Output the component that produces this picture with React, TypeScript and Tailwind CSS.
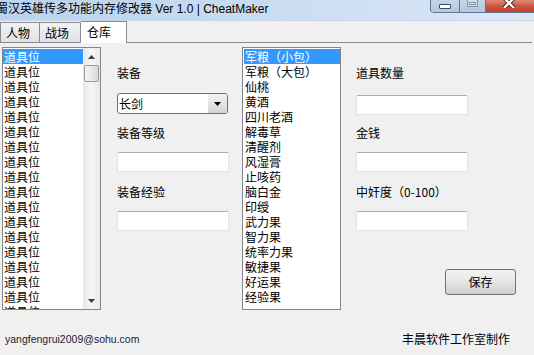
import React from 'react';

const cjk = { fontFamily: '"Noto Sans CJK SC", "Noto Sans", sans-serif' };

const leftItems = Array.from({ length: 18 }, () => '道具位');
const midItems = [
  '军粮（小包）',
  '军粮（大包）',
  '仙桃',
  '黄酒',
  '四川老酒',
  '解毒草',
  '清醒剂',
  '风湿膏',
  '止咳药',
  '脑白金',
  '印绶',
  '武力果',
  '智力果',
  '统率力果',
  '敏捷果',
  '好运果',
  '经验果',
];

const ListRow: React.FC<{ text: string; selected?: boolean }> = ({ text, selected }) => (
  <div
    className={`h-[15px] leading-[15px] pl-px text-[12px] whitespace-nowrap overflow-hidden ${
      selected ? 'bg-[#3399ff] text-white' : 'text-black'
    }`}
  >
    {text}
  </div>
);

const TextBox: React.FC<{ className?: string }> = ({ className = '' }) => (
  <div
    className={`h-[20px] w-[112px] bg-white rounded-[2px] border border-[#dfe3ea] border-t-[#abadb3] ${className}`}
  />
);

const Label: React.FC<{ children: React.ReactNode; className?: string }> = ({ children, className = '' }) => (
  <div className={`text-[12px] leading-[16px] text-black whitespace-nowrap ${className}`}>{children}</div>
);

export default function App() {
  return (
    <div className="w-[534px] h-[355px] overflow-hidden bg-[#f0f0f0] flex flex-col" style={cjk}>
      {/* title bar */}
      <div className="h-[21px] shrink-0 flex items-start bg-gradient-to-r from-[#bcd3ed] via-[#c9dcf1] to-[#dbe8f6] border-b border-[#c6d6e8]">
        <div className="ml-[-4px] mt-[1px] text-[12px] leading-[14px] text-black whitespace-nowrap">
          蜀汉英雄传多功能内存修改器
          <span style={{ fontFamily: '"Liberation Sans", Arial, sans-serif' }}> Ver 1.0 | CheatMaker</span>
        </div>
        <div className="flex-1" />
        <div className="flex h-[13px] mr-[-8px] border border-t-0 border-[#5f7696] rounded-b-[4px] overflow-hidden">
          <div className="w-[29px] flex items-center justify-center bg-gradient-to-b from-[#c5d6ea] to-[#b2c6de] border-r border-[#5f7696]">
            <div className="w-[12px] h-[5px] bg-white border border-[#3b4b60] rounded-[1px]" />
          </div>
          <div className="w-[26px] flex items-start justify-center bg-gradient-to-b from-[#c5d6ea] to-[#b2c6de] border-r border-[#5f7696]">
            <div className="w-[11px] h-[8px] -mt-px border border-[#8192a8] bg-[#d6e1ee] flex items-center justify-center">
              <div className="w-[7px] h-[3px] border border-[#8192a8] bg-[#e8eef5]" />
            </div>
          </div>
          <div className="w-[55px] pl-[15px] flex items-start bg-gradient-to-b from-[#e08b7b] via-[#cf5542] to-[#c2402c]">
            <svg width="16" height="10" viewBox="0 0 16 10" className="-mt-[2px]">
              <path d="M3 0 L13 10 M13 0 L3 10" stroke="#3a1410" strokeWidth="4" />
              <path d="M3 0 L13 10 M13 0 L3 10" stroke="#ffffff" strokeWidth="2.4" />
            </svg>
          </div>
        </div>
      </div>

      {/* tabs */}
      <div className="h-[22px] shrink-0 flex items-end text-[12px]">
        <div className="h-[21px] w-[40px] pl-[5px] pt-[2px] leading-[16px] border border-b border-[#898c95] bg-gradient-to-b from-[#f3f3f3] to-[#e1e1e1]">
          人物
        </div>
        <div className="h-[21px] w-[41px] pl-[5px] pt-[2px] leading-[16px] border border-l-0 border-[#898c95] bg-gradient-to-b from-[#f3f3f3] to-[#e1e1e1]">
          战场
        </div>
        <div className="h-[22px] w-[46px] pl-[6px] pt-[2px] leading-[16px] border border-b-0 border-l-0 border-[#898c95] bg-white">
          仓库
        </div>
        <div className="flex-1 h-px bg-[#898c95] mr-[2px]" />
      </div>

      {/* panel */}
      <div className="flex pt-[4px]">
        {/* left list */}
        <div className="ml-[2px] w-[99px] h-[263px] border border-[#828790] bg-white flex">
          <div className="flex-1 pt-px overflow-hidden">
            {leftItems.map((t, i) => (
              <ListRow key={i} text={t} selected={i === 0} />
            ))}
          </div>
          <div className="w-[17px] flex flex-col bg-gradient-to-r from-[#e9e9e9] via-[#f5f5f5] to-[#e9e9e9]">
            <div className="h-[17px] flex items-center justify-center">
              <svg width="7" height="4" viewBox="0 0 7 4">
                <polygon points="3.5,0 7,4 0,4" fill="#3c3c3c" />
              </svg>
            </div>
            <div className="h-[17px] mx-px rounded-[2px] border border-[#9a9a9a] bg-gradient-to-r from-[#f3f3f3] via-[#e8e8e8] to-[#d9d9d9]" />
            <div className="flex-1" />
            <div className="h-[17px] flex items-center justify-center">
              <svg width="7" height="4" viewBox="0 0 7 4">
                <polygon points="0,0 7,0 3.5,4" fill="#3c3c3c" />
              </svg>
            </div>
          </div>
        </div>

        {/* middle column */}
        <div className="ml-[16px] w-[111px] flex flex-col">
          <Label className="mt-[18px]">装备</Label>
          <div className="mt-[12px] h-[21px] w-[111px] flex bg-white border border-[#707070] rounded-[3px] overflow-hidden">
            <div className="flex-1 pl-[1px] text-[12px] leading-[19px] text-black">长剑</div>
            <div className="w-[19px] flex items-center justify-center bg-gradient-to-b from-[#f2f2f2] via-[#e5e5e5] to-[#d4d4d4]">
              <svg width="7" height="4" viewBox="0 0 7 4">
                <polygon points="0,0 7,0 3.5,4" fill="#000" />
              </svg>
            </div>
          </div>
          <Label className="mt-[11px]">装备等级</Label>
          <TextBox className="mt-[11px] w-[111px]" />
          <Label className="mt-[12px]">装备经验</Label>
          <TextBox className="mt-[11px] w-[111px]" />
        </div>

        {/* middle list */}
        <div className="ml-[14px] w-[99px] h-[263px] border border-[#828790] bg-white pt-px pl-px overflow-hidden">
          {midItems.map((t, i) => (
            <ListRow key={i} text={t} selected={i === 0} />
          ))}
        </div>

        {/* right column */}
        <div className="ml-[15px] flex-1 flex flex-col">
          <Label className="mt-[18px]">道具数量</Label>
          <TextBox className="mt-[14px]" />
          <Label className="mt-[10px]">金钱</Label>
          <TextBox className="mt-[11px]" />
          <Label className="mt-[12px]">中奸度（0-100）</Label>
          <TextBox className="mt-[11px]" />
          <button className="mt-[38px] self-end mr-[18px] w-[71px] h-[26px] rounded-[3px] border border-[#707070] text-[12px] text-black bg-gradient-to-b from-[#f2f2f2] via-[#e6e6e6] to-[#cfcfcf]">
            保存
          </button>
        </div>
      </div>

      {/* footer */}
      <div className="mt-[21px] flex items-center justify-between pl-[5px] pr-[24px]">
        <div
          className="text-[10.5px] leading-[16px] text-[#1c1c2e]"
          style={{ fontFamily: '"Liberation Sans", Arial, sans-serif' }}
        >
          yangfengrui2009@sohu.com
        </div>
        <div className="text-[12px] leading-[16px] text-black">丰晨软件工作室制作</div>
      </div>
    </div>
  );
}
